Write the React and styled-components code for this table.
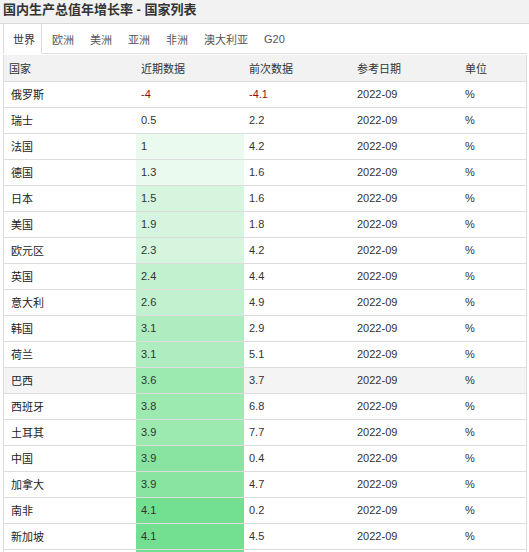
import React from "react";
import styled, { createGlobalStyle } from "styled-components";

const GlobalStyle = createGlobalStyle`
  html, body { margin: 0; padding: 0; background: #fff; }
  body {
    font-family: "Liberation Sans", Arial, "Noto Sans CJK SC", sans-serif;
    color: #333;
  }
`;

const Title = styled.div`
  height: 23px;
  line-height: 19px;
  padding-left: 3px;
  background: #f2f2f2;
  border-bottom: 1px solid #d9d9d9;
  font-size: 13px;
  font-weight: bold;
  color: #333;
  white-space: nowrap;
`;

const Body = styled.div`
  padding: 0 2px 0 3px;
`;

const TabBar = styled.div`
  display: flex;
  height: 29px;
  border-bottom: 1px solid #ddd;
`;

const Tab = styled.div`
  display: flex;
  align-items: center;
  height: ${(p) => (p.$active ? "30px" : "29px")};
  box-sizing: border-box;
  padding: ${(p) => (p.$active ? "0 6px 0 9px" : "0 6px 0 10px")};
  font-size: 11px;
  color: ${(p) => (p.$active ? "#333" : "#555")};
  background: #fff;
  border: ${(p) => (p.$active ? "1px solid #ddd" : "none")};
  border-top: none;
  border-bottom: ${(p) => (p.$active ? "1px solid #fff" : "none")};
  white-space: nowrap;
`;

const Table = styled.table`
  width: 524px;
  margin-top: 1px;
  border-collapse: separate;
  border-spacing: 0;
  table-layout: fixed;
  border-left: 1px solid #ddd;
  border-right: 1px solid #ddd;
  font-size: 11px;
`;

const Th = styled.th`
  height: 25px;
  padding: 0 5px 1px;
  text-align: left;
  font-weight: normal;
  color: #333;
  background: #f2f2f2;
  border-bottom: 1px solid #ddd;
  white-space: nowrap;
`;

const Row = styled.tr`
  background: ${(p) => (p.$hover ? "#f4f4f4" : "#fff")};
`;

const Td = styled.td`
  height: 24px;
  padding: 0 5px 1px;
  border-bottom: 1px solid #ddd;
  white-space: nowrap;
  color: ${(p) => (p.$neg ? "#8f1010" : "#333")};
  background: ${(p) => p.$bg || "transparent"};
`;

const NameCell = styled(Td)`
  padding-left: 7px;
  color: #222;
`;

const cols = [132, 108, 108, 108, 66];

const shades = {
  0: null,
  1: "#eafaef",
  2: "#d6f5df",
  3: "#c2f1cf",
  4: "#afedc0",
  5: "#9deab1",
  6: "#88e4a0",
  7: "#73df90",
};

const rows = [
  ["俄罗斯", "-4", "-4.1", 0],
  ["瑞士", "0.5", "2.2", 0],
  ["法国", "1", "4.2", 1],
  ["德国", "1.3", "1.6", 1],
  ["日本", "1.5", "1.6", 2],
  ["美国", "1.9", "1.8", 2],
  ["欧元区", "2.3", "4.2", 2],
  ["英国", "2.4", "4.4", 3],
  ["意大利", "2.6", "4.9", 3],
  ["韩国", "3.1", "2.9", 4],
  ["荷兰", "3.1", "5.1", 4],
  ["巴西", "3.6", "3.7", 5],
  ["西班牙", "3.8", "6.8", 5],
  ["土耳其", "3.9", "7.7", 5],
  ["中国", "3.9", "0.4", 6],
  ["加拿大", "3.9", "4.7", 6],
  ["南非", "4.1", "0.2", 7],
  ["新加坡", "4.1", "4.5", 7],
  ["澳大利亚", "5.9", "3.6", 7],
];

const tabs = ["世界", "欧洲", "美洲", "亚洲", "非洲", "澳大利亚", "G20"];

export default function App() {
  return (
    <>
      <GlobalStyle />
      <Title>国内生产总值年增长率 - 国家列表</Title>
      <Body>
        <TabBar>
          {tabs.map((t, i) => (
            <Tab key={t} $active={i === 0}>
              {t}
            </Tab>
          ))}
        </TabBar>
        <Table>
          <colgroup>
            {cols.map((w, i) => (
              <col key={i} style={{ width: w }} />
            ))}
          </colgroup>
          <thead>
            <tr>
              <Th>国家</Th>
              <Th>近期数据</Th>
              <Th>前次数据</Th>
              <Th>参考日期</Th>
              <Th>单位</Th>
            </tr>
          </thead>
          <tbody>
            {rows.map(([name, cur, prev, shade]) => (
              <Row key={name} $hover={name === "巴西"}>
                <NameCell>{name}</NameCell>
                <Td $neg={cur.startsWith("-")} $bg={shades[shade]}>
                  {cur}
                </Td>
                <Td $neg={prev.startsWith("-")}>{prev}</Td>
                <Td>2022-09</Td>
                <Td>%</Td>
              </Row>
            ))}
          </tbody>
        </Table>
      </Body>
    </>
  );
}
